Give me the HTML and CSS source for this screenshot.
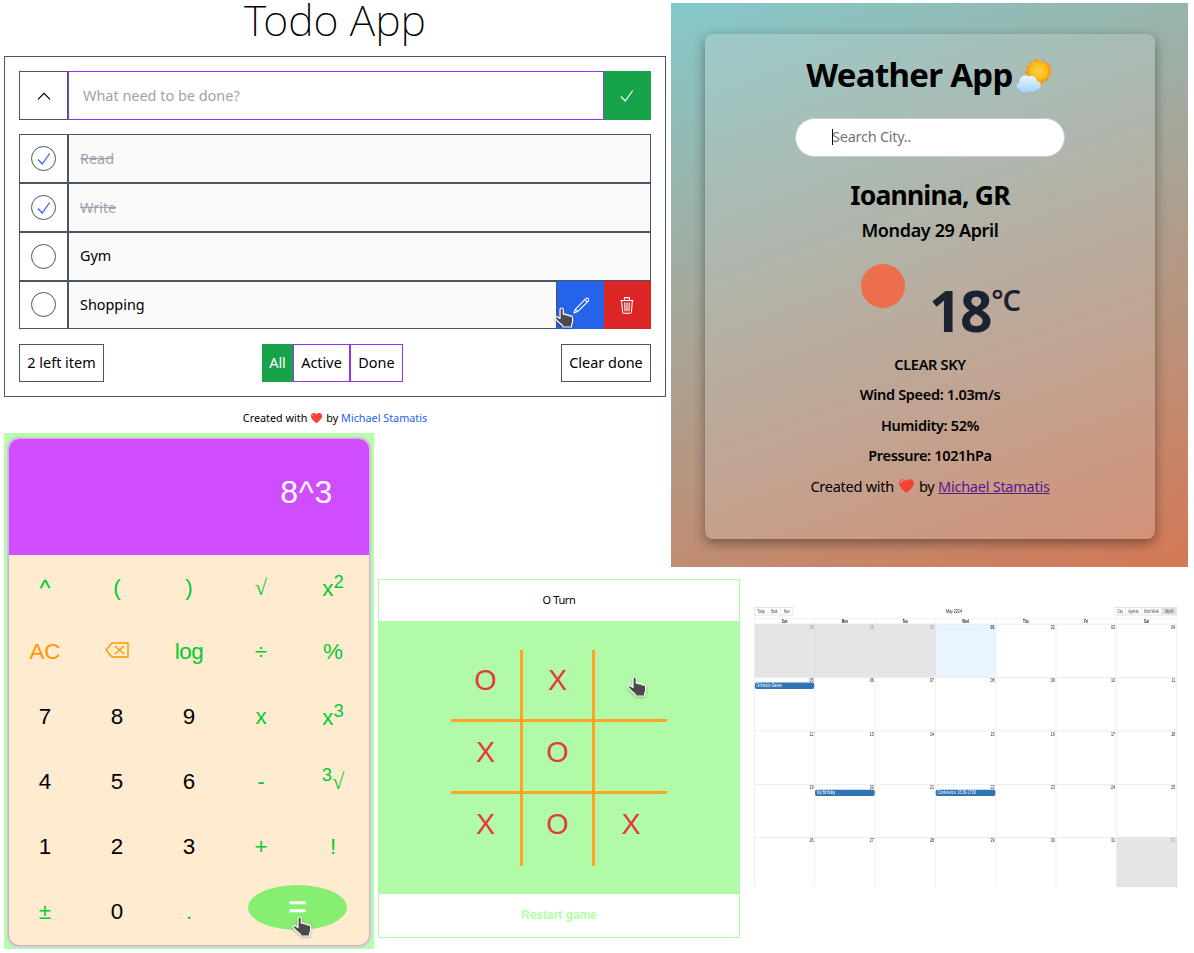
FILE: index.html
```html
<!DOCTYPE html>
<html lang="en">
<head>
<meta charset="utf-8">
<title>Projects</title>
<link rel="stylesheet" href="styles.css">
</head>
<body>
<svg class="defs" width="0" height="0">
  <symbol id="hand" viewBox="0 0 20 22">
    <path d="M6 2.6Q6 1 7.6 1T9.300 2.600V7.200L10.800 6.800 12.200 8 14 7.600 15.200 8.800 17 8.600Q18.600 9 18.600 10.800V15L17.600 18V20H9L8 18 3.800 14.500 1.200 11.300Q.8 9.500 2.600 9.400L6 11.500Z" fill="#4a4a4a" stroke="#fff" stroke-width="1.200" stroke-linejoin="round"/>
  </symbol>
  <symbol id="heart" viewBox="0 0 16 16">
    <path d="M8 15C5 12.500 .5 9 .5 5.200C.5 1 5.800-.2 8 3.300C10.200-.2 15.500 1 15.500 5.200C15.500 9 11 12.500 8 15Z" fill="#f44336"/>
    <path d="M2.200 5C2.400 3.400 3.600 2.700 4.800 2.700" stroke="#ff8a75" stroke-width="1.200" fill="none" stroke-linecap="round"/>
  </symbol>
  <symbol id="check" viewBox="0 0 14 14">
    <path d="M1 7.500L5.200 12 12.700 1.500" fill="none" stroke="currentColor" stroke-width="1.200"/>
  </symbol>
</svg>
<main class="board">
  <section class="todo">
    <h1 class="todo-title"><span>Todo App</span></h1>
    <div class="todo-box">
      <div class="todo-form">
        <div class="toggle"><svg width="14" height="8" viewBox="0 0 14 8"><path d="M1 7.300L7 1.300 13 7.300" fill="none" stroke="#000" stroke-width="1.200"/></svg></div>
        <div class="todo-input">What need to be done?</div>
        <div class="add"><svg width="14" height="14"><use href="#check"/></svg></div>
      </div>
      <ul class="todo-list">
        <li class="item done"><div class="tick"><span class="ring"><svg width="14" height="14"><use href="#check"/></svg></span></div><div class="label">Read</div></li>
        <li class="item done"><div class="tick"><span class="ring"><svg width="14" height="14"><use href="#check"/></svg></span></div><div class="label">Write</div></li>
        <li class="item"><div class="tick"><span class="ring"></span></div><div class="label">Gym</div></li>
        <li class="item last"><div class="tick"><span class="ring"></span></div><div class="label">Shopping</div>
          <div class="edit"><svg width="17" height="17" viewBox="0 0 17 17"><path d="M1 16L2.300 12.400 13 1.400Q14 .6 15 1.500T15.500 3.800L4.600 14.600ZM2.300 12.400L4.600 14.600M11.800 2.600L14.300 5" fill="none" stroke="#fff" stroke-width="1.100" stroke-linejoin="round"/></svg>
            <svg class="hand hand-edit" width="20" height="22"><use href="#hand"/></svg></div>
          <div class="remove"><svg width="14" height="17" viewBox="0 0 14 17"><path d="M.5 3.500H13.500M4.500 3.300V1Q4.500.6 5 .6H9Q9.500.6 9.500 1V3.300M1.600 3.600L2.600 15Q2.800 16.300 4 16.300H10Q11.200 16.300 11.400 15L12.400 3.600M4.700 5.500L5 14.200M7 5.500V14.200M9.300 5.500L9 14.200" fill="none" stroke="#fff" stroke-width="1.100"/></svg></div>
        </li>
      </ul>
      <div class="todo-foot">
        <div class="pill left">2 left item</div>
        <div class="filters"><div class="pill all">All</div><div class="pill active">Active</div><div class="pill fdone">Done</div></div>
        <div class="pill clear">Clear done</div>
      </div>
    </div>
    <p class="credit"><span>Created with</span><svg width="13" height="12"><use href="#heart"/></svg><span>by <a>Michael Stamatis</a></span></p>
  </section>

  <section class="weather">
    <div class="w-card">
      <h2 class="w-title"><span>Weather App</span>
        <svg width="38" height="36" viewBox="0 0 38 36">
          <defs><radialGradient id="sg"><stop offset="0" stop-color="#ffd447"/><stop offset="1" stop-color="#fdb60c"/></radialGradient>
          <linearGradient id="cg" x2="0" y2="1"><stop offset="0" stop-color="#edf6fd"/><stop offset="1" stop-color="#a3d2fb"/></linearGradient></defs>
          <path d="M23 1L25.500 4.500 29 1.500 30.500 5.500 34.500 4.500 34.500 9 37.500 10.500 35 14 37 18 33 19 33 23.500 29 23 26.500 28 23 24.500 18 25.500 17.500 22 12.500 20 13.500 16.500 9 15 12.500 12 9.500 8 14.500 8 14 4 18.500 5 19.500 1Z" fill="#ed9c28"/>
          <circle cx="23.500" cy="13" r="10" fill="url(#sg)"/>
          <path d="M5 31.500C1 31 .5 25.500 4.500 24.500C4 19 9 15.500 14 18.500C18 17 21.500 19 21.500 23C27 23.500 27.500 30.500 22 31.500C19 34.500 15 33.500 14 33C11 35.500 6 34.500 5 31.500Z" fill="url(#cg)"/>
        </svg></h2>
      <div class="search"><i class="caret"></i><span>Search City..</span></div>
      <h3 class="city">Ioannina, GR</h3>
      <div class="date">Monday 29 April</div>
      <div class="temp-row"><div class="sun"></div><div class="temp"><b>18</b><span>°C</span></div></div>
      <div class="line sky">CLEAR SKY</div>
      <div class="line wind">Wind Speed: 1.03m/s</div>
      <div class="line hum">Humidity: 52%</div>
      <div class="line pres">Pressure: 1021hPa</div>
      <div class="w-credit"><span>Created with</span><svg width="17" height="16"><use href="#heart"/></svg><span>by <a>Michael Stamatis</a></span></div>
    </div>
  </section>

  <section class="calc">
    <div class="calc-card">
      <div class="display">8^3</div>
      <div class="keys">
        <div class="key g caret-key">^</div><div class="key g">(</div><div class="key g">)</div><div class="key g root">√</div><div class="key g pow"><span>x<sup>2</sup></span></div>
        <div class="key o">AC</div><div class="key o"><svg width="24" height="16" viewBox="0 0 24 16"><path d="M7 1H23V15H7L1 8ZM10 4L19 12M19 4L10 12" fill="none" stroke="#ff9800" stroke-width="1.400"/></svg></div><div class="key g log">log</div><div class="key g">÷</div><div class="key g">%</div>
        <div class="key">7</div><div class="key">8</div><div class="key">9</div><div class="key g">x</div><div class="key g pow"><span>x<sup>3</sup></span></div>
        <div class="key">4</div><div class="key">5</div><div class="key">6</div><div class="key g">-</div><div class="key g"><span><sup>3</sup><i class="root">√</i></span></div>
        <div class="key">1</div><div class="key">2</div><div class="key">3</div><div class="key g">+</div><div class="key g">!</div>
        <div class="key g">±</div><div class="key">0</div><div class="key g">.</div>
        <div class="equals"><span>=</span><svg class="hand hand-eq" width="20" height="22"><use href="#hand"/></svg></div>
      </div>
    </div>
  </section>

  <section class="ttt">
    <div class="turn"><span>O Turn</span></div>
    <div class="field">
      <div class="cells">
        <div class="cell">O</div><div class="cell">X</div><div class="cell"><svg class="hand hand-ttt" width="20" height="22"><use href="#hand"/></svg></div>
        <div class="cell">X</div><div class="cell">O</div><div class="cell"></div>
        <div class="cell">X</div><div class="cell">O</div><div class="cell">X</div>
      </div>
    </div>
    <div class="restart">Restart game</div>
  </section>

  <section class="cal-wrap">
    <div class="cal">
      <div class="bar">
        <div class="btns"><span class="b-today">Today</span><span class="b-back">Back</span><span class="b-next">Next</span></div>
        <div class="month">May 2024</div>
        <div class="btns"><span class="b-day">Day</span><span class="b-agenda">Agenda</span><span class="b-ww">Work Week</span><span class="b-month on">Month</span></div>
      </div>
      <div class="days">
        <b>Sun</b><b>Mon</b><b>Tue</b><b>Wed</b><b>Thu</b><b>Fri</b><b>Sat</b>
        <div class="off">28</div><div class="off">29</div><div class="off">30</div><div class="today">01</div><div>02</div><div>03</div><div>04</div>
        <div>05<em>Orthodox Easter</em></div><div>06</div><div>07</div><div>08</div><div>09</div><div>10</div><div>11</div>
        <div>12</div><div>13</div><div>14</div><div>15</div><div>16</div><div>17</div><div>18</div>
        <div>19</div><div>20<em>My Birthday</em></div><div>21</div><div>22<em>Conference: 16:30-17:00</em></div><div>23</div><div>24</div><div>25</div>
        <div>26</div><div>27</div><div>28</div><div>29</div><div>30</div><div>31</div><div class="off">01</div>
      </div>
    </div>
  </section>
</main>
</body>
</html>
```
FILE: styles.css
```css
* { box-sizing: border-box; }
body { margin: 0; background: #fff; font-family: "Noto Sans", sans-serif; color: #000; }
h1, h2, h3, p, ul { margin: 0; padding: 0; }
.defs { position: absolute; }
svg { display: block; flex: none; }
.board { display: grid; width: 1194px; height: 953px; padding-left: 4px; grid-template-columns: 374px 293px 69px 454px; grid-template-rows: 433px 146px 374px; }
.hand { position: absolute; filter: drop-shadow(0 1px 1px rgba(0,0,0,.3)); }

/* Todo */
.todo { grid-column: 1 / 3; grid-row: 1; width: 662px; }
.todo-title { height: 56px; line-height: 40px; font-size: 43px; font-weight: 200; text-align: center; }
.todo-box { height: 341px; border: 1px solid #4b5563; padding: 14px; display: flex; flex-direction: column; }
.todo-form { display: flex; height: 49px; }
.toggle { width: 49px; border: 1px solid #4b5563; display: flex; align-items: center; justify-content: center; }
.todo-input { flex: 1; border: 1px solid #9333ea; padding-left: 14px; line-height: 47px; font-size: 14.450px; color: #9ca3af; }
.add { width: 47px; background: #16a34a; color: #fff; display: flex; align-items: center; justify-content: center; padding-right: 2px; }
.todo-list { margin-top: 14px; list-style: none; }
.item { display: flex; height: 49px; font-size: 14.400px; }
.item.last { height: 48px; }
.tick { width: 49px; border: 1px solid #4b5563; display: flex; align-items: center; justify-content: center; }
.ring { width: 25px; height: 25px; border: 1px solid #4b5563; border-radius: 50%; display: flex; align-items: center; justify-content: center; color: #2563eb; }
.last .ring { margin-bottom: 1px; }
.label { flex: 1; border: 1px solid #4b5563; background: #fafafa; padding-left: 11px; line-height: 45px; }
.last .label { line-height: 46px; }
.done .label { color: #9ca3af; text-decoration: line-through; line-height: 47px; }
.edit, .remove { width: 47px; display: flex; align-items: center; justify-content: center; }
.edit { background: #2563eb; position: relative; padding-left: 2px; }
.remove { background: #dc2626; padding-right: 2px; }
.hand-edit { left: -3px; top: 26px; }
.todo-foot { margin-top: 15px; display: flex; justify-content: space-between; height: 38px; }
.filters { display: flex; width: 141px; }
.pill { border: 1px solid #4b5563; font-size: 14.450px; line-height: 35px; text-align: center; white-space: nowrap; }
.left { width: 85px; }
.all { width: 31px; background: #16a34a; color: #fff; border-color: #16a34a; }
.active { width: 57px; border-color: #9333ea; }
.fdone { width: 53px; border-color: #9333ea; }
.clear { width: 90px; }
.credit { height: 36px; padding-top: 5px; display: flex; align-items: center; justify-content: center; gap: 3px; font-size: 10.800px; }
.credit a { color: #2563eb; }

/* Weather */
.weather { grid-column: 3 / 5; grid-row: 1 / 3; width: 517px; height: 564px; margin-top: 3px; padding: 31px 33px 28px 34px; background: linear-gradient(160deg, #84c9ca, #d47855); }
.w-card { height: 505px; border-radius: 8px; background: rgba(222,222,222,.22); box-shadow: 0 4px 12px rgba(0,0,0,.4); display: flex; flex-direction: column; align-items: center; white-space: nowrap; }
.w-title { height: 84px; display: flex; align-items: center; gap: 2px; font-size: 33px; letter-spacing: -.7px; }
.w-title span { padding-bottom: 3px; margin-left: -1px; }
.search { width: 270px; height: 39px; border: 1px solid #ccc; border-radius: 20px; background: #fff; padding-left: 36px; padding-bottom: 2px; display: flex; align-items: center; font-size: 14.500px; letter-spacing: -.25px; color: #757575; }
.search span { margin: -1px 0 0 -1px; }
.caret { width: 1px; height: 16px; background: #000; }
.city { margin-top: 19px; height: 38px; line-height: 38px; font-size: 26.500px; letter-spacing: -.8px; }
.date { height: 32px; line-height: 32px; font-size: 18px; font-weight: 560; letter-spacing: -.35px; }
.temp-row { height: 103px; display: flex; padding-top: 18px; gap: 26px; margin-left: 23px; }
.sun { width: 44px; height: 44px; border-radius: 50%; background: #ec6e4c; margin-left: -2px; }
.temp { display: flex; color: #1d2230; }
.temp b { font-size: 57px; line-height: 57px; margin: 18px 0 0 -2px; letter-spacing: -1.500px; }
.temp span { font-size: 29px; line-height: 30px; margin-top: 21px; font-weight: 600; letter-spacing: -1px; }
.line { height: 30.400px; line-height: 30px; font-size: 14.500px; font-weight: 560; letter-spacing: -.32px; }
.w-credit { height: 31px; display: flex; align-items: center; gap: 4px; font-size: 14.500px; letter-spacing: -.25px; }
.w-credit a { color: #551a8b; text-decoration: underline; }

/* Calculator */
.calc { grid-column: 1; grid-row: 2 / 4; width: 370px; height: 516px; background: #b5ffac; padding: 6px 5px 4px; font-family: "Liberation Sans", Arial, sans-serif; }
.calc-card { height: 506px; border-radius: 10px; background: #ffebd0; overflow: hidden; box-shadow: 0 0 3px 1px #e67ff5; }
.display { height: 116px; background: #d04cff; color: #fff; font-size: 32px; line-height: 106px; text-align: right; padding-right: 36px; letter-spacing: .7px; }
.keys { display: grid; grid-template-columns: repeat(5, 72px); grid-auto-rows: 65px; }
.key { display: flex; align-items: center; justify-content: center; font-size: 22.400px; padding-bottom: 2px; }
.key:nth-child(-n+5) { padding-bottom: 0; }
.g { color: #00cc33; }
.o { color: #ff9800; }
.o svg { margin-bottom: 4px; }
.caret-key { -webkit-text-stroke: .3px #00cc33; }
.log { letter-spacing: -.5px; }
.key sup { font-size: 18.500px; line-height: 0; }
.key.pow { padding-top: 3px; }
.root { font-style: normal; font-family: "Liberation Serif", serif; }
.equals { grid-column: 4 / 6; width: 99px; height: 45px; margin: 5px 0 0 23px; border-radius: 50%; background: #86ee70; color: #fff; font-size: 32px; -webkit-text-stroke: .6px #fff; line-height: 43px; text-align: center; position: relative; }
.hand-eq { left: 44px; top: 31px; }

/* Tic tac toe */
.ttt { grid-column: 2 / 4; grid-row: 3; width: 362px; height: 359px; border: 1px solid #b1faa8; display: flex; flex-direction: column; }
.turn { flex: none; height: 41px; line-height: 40px; font-size: 11px; letter-spacing: -.4px; text-align: center; }
.field { flex: none; height: 273px; background: #b1faa8; padding: 29px 72px; }
.cells { display: grid; grid-template-columns: repeat(3, 72px); grid-auto-rows: 72px; }
.cell { border-right: 3px solid #ffa424; border-bottom: 3px solid #ffa424; display: flex; align-items: center; justify-content: center; color: #e53a3a; font-family: "Liberation Sans", Arial, sans-serif; font-size: 28.800px; padding-bottom: 9px; position: relative; }
.cell:nth-child(3n) { border-right: 0; }
.cell:nth-child(n+7) { border-bottom: 0; padding-bottom: 12px; }
.hand-ttt { left: 32px; top: 26px; }
.restart { flex: 1; line-height: 43px; text-align: center; font-family: "Liberation Sans", Arial, sans-serif; font-size: 12px; font-weight: bold; color: #b1ffa8; }

/* Calendar: laid out at full size, shrunk to a thumbnail */
.cal-wrap { grid-column: 4; grid-row: 3; padding: 28px 0 0 13.500px; overflow: hidden; }
.cal { width: 1511px; height: 667px; transform: scale(.28, .42); transform-origin: 0 0; font-family: "Liberation Sans", Arial, sans-serif; font-size: 13px; color: #222; }
.bar { display: flex; justify-content: space-between; height: 27px; }
.btns { display: flex; height: 20px; border: 2px solid #ddd; color: #444; font-size: 10.500px; }
.btns span { line-height: 16px; text-align: center; border-right: 2px solid #ddd; white-space: nowrap; }
.btns span:last-child { border-right: 0; }
.b-today { width: 49px; } .b-back { width: 45px; } .b-next { width: 42px; }
.b-day { width: 38px; } .b-agenda { width: 56px; } .b-ww { width: 73px; } .b-month { width: 52px; }
.btns .on { background: #e0e0e0; }
.month { line-height: 20px; }
.days { height: 640px; display: grid; grid-template-columns: repeat(7, 1fr); grid-template-rows: 11px 127px 127px 128px 126px 119px; border-left: 3px solid #eee; border-top: 2px solid #eee; }
.days b { font-size: 11px; line-height: 11px; text-align: center; border-right: 3px solid #eee; }
.days div { border-right: 3px solid #eee; border-top: 2px solid #eaeaea; text-align: right; line-height: 11px; padding-right: 3px; }
.days .off { background: #e5e5e5; color: #999; border-color: #dfdfdf; }
.days .today { background: #e8f4ff; font-weight: bold; }
.days em { display: block; margin: 0 -3px 0 0; height: 15px; border-radius: 5px; background: #3174b5; color: #fff; font-style: normal; font-weight: normal; text-align: left; padding-left: 6px; line-height: 15px; font-size: 12.500px; }
```
